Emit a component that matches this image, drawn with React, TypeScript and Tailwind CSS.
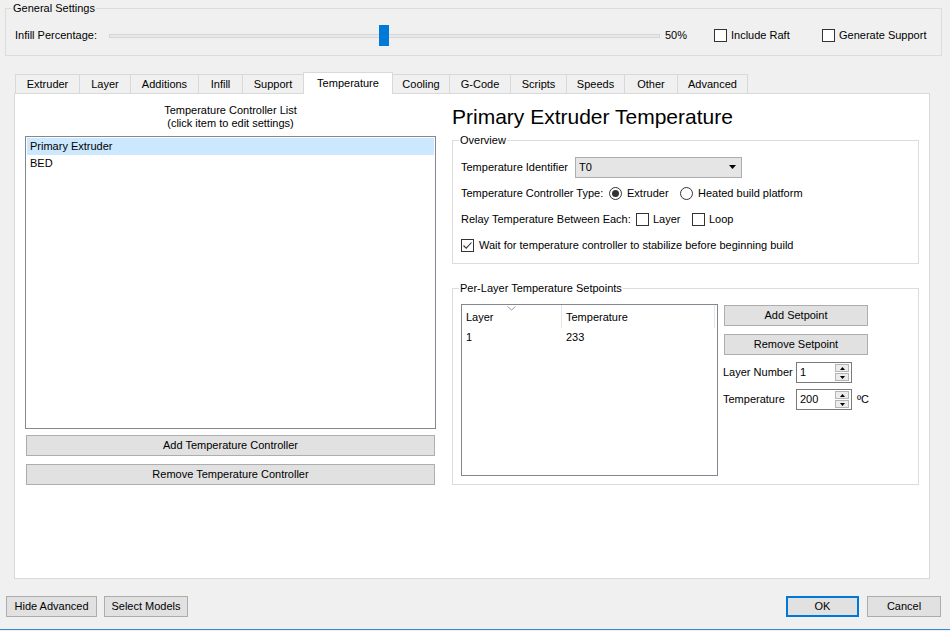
import React from "react";

function Check({ checked = false }: { checked?: boolean }) {
  return (
    <div className="w-[13px] h-[13px] flex-none border border-[#333333] bg-white relative">
      {checked && (
        <svg width="11" height="11" viewBox="0 0 11 11" className="block">
          <path d="M1.5 5.5 L4.2 8.2 L9.5 2.5" fill="none" stroke="#333333" strokeWidth="1.1" />
        </svg>
      )}
    </div>
  );
}

function Radio({ checked = false }: { checked?: boolean }) {
  return (
    <div className="w-[13px] h-[13px] flex-none rounded-full border border-[#333333] bg-white flex items-center justify-center">
      {checked && <div className="w-[7px] h-[7px] rounded-full bg-[#333333]" />}
    </div>
  );
}

function Spin() {
  return (
    <div className="ml-auto mr-[2px] mt-[1px] w-[14px] h-[17px] flex flex-col gap-[1px]">
      <div className="h-[8px] border border-[#b4b4b4] bg-[#ececec] flex items-center justify-center">
        <svg width="5" height="3" viewBox="0 0 5 3" className="block">
          <polygon points="2.5,0 5,3 0,3" fill="#000" />
        </svg>
      </div>
      <div className="h-[8px] border border-[#b4b4b4] bg-[#ececec] flex items-center justify-center">
        <svg width="5" height="3" viewBox="0 0 5 3" className="block">
          <polygon points="0,0 5,0 2.5,3" fill="#000" />
        </svg>
      </div>
    </div>
  );
}

function Numeric({ value }: { value: string }) {
  return (
    <div className="w-[56px] h-[21px] flex-none border border-[#7a7a7a] bg-white flex">
      <div className="pl-[3px] leading-[19px]">{value}</div>
      <Spin />
    </div>
  );
}

const tabs: { name: string; w: string; sel?: boolean; noLeft?: boolean; last?: boolean }[] = [
  { name: "Extruder", w: "w-[64px]" },
  { name: "Layer", w: "w-[51px]" },
  { name: "Additions", w: "w-[68px]" },
  { name: "Infill", w: "w-[44px]" },
  { name: "Support", w: "w-[61px]" },
  { name: "Temperature", w: "w-[90px]", sel: true },
  { name: "Cooling", w: "w-[56px]", noLeft: true },
  { name: "G-Code", w: "w-[61px]" },
  { name: "Scripts", w: "w-[56px]" },
  { name: "Speeds", w: "w-[58px]" },
  { name: "Other", w: "w-[53px]" },
  { name: "Advanced", w: "w-[71px]", last: true },
];

export default function App() {
  return (
    <div className="w-[950px] h-[631px] bg-[#f0f0f0] text-[11px] text-black font-['Liberation_Sans',Arial,sans-serif] flex flex-col overflow-hidden">
      {/* General settings */}
      <fieldset className="ml-[5px] mt-[1px] w-[937px] border border-[#dcdcdc]">
        <legend className="ml-[6px] px-[1px] leading-[14px]">General Settings</legend>
        <div className="h-[40px] pt-[1px] flex items-center">
          <div className="w-[103px] pl-[9px] flex-none">Infill Percentage:</div>
          <div className="w-[551px] h-[21px] flex-none relative flex items-center">
            <div className="w-full h-[4px] border border-[#d6d6d6] bg-[#e7eaea]" />
            <div className="absolute left-[270px] top-0 w-[10px] h-[21px] bg-[#007ad9]" />
          </div>
          <div className="w-[54px] pl-[5px] flex-none">50%</div>
          <div className="w-[108px] flex-none flex items-center">
            <Check />
            <span className="ml-[4px]">Include Raft</span>
          </div>
          <div className="flex items-center">
            <Check />
            <span className="ml-[4px]">Generate Support</span>
          </div>
        </div>
      </fieldset>

      {/* Tabs */}
      <div className="ml-[14px] mt-[16px] pl-[1px] h-[21px] flex items-end relative z-10">
        {tabs.map((t) =>
          t.sel ? (
            <div
              key={t.name}
              className={`${t.w} h-[22px] -mb-[1px] flex-none bg-white border-l border-t border-r border-[#d9d9d9] flex items-center justify-center pb-[1px]`}
            >
              {t.name}
            </div>
          ) : (
            <div
              key={t.name}
              className={`${t.w} h-[19px] flex-none bg-[#f0f0f0] border-t border-[#d9d9d9] flex items-center justify-center ${
                t.noLeft ? "" : "border-l"
              } ${t.last ? "border-r" : ""}`}
            >
              {t.name}
            </div>
          )
        )}
      </div>

      {/* Tab page */}
      <div className="ml-[14px] w-[916px] h-[486px] flex-none border border-[#d9d9d9] bg-white flex">
        {/* Left column */}
        <div className="ml-[10px] w-[411px] pt-[10px] flex flex-col">
          <div className="text-center leading-[13px]">
            <div>Temperature Controller List</div>
            <div>(click item to edit settings)</div>
          </div>
          <div className="mt-[6px] h-[293px] border border-[#828790] bg-white pt-[1px] px-[1px]">
            <div className="h-[17px] bg-[#cce8ff] pl-[3px] leading-[17px]">Primary Extruder</div>
            <div className="h-[16px] pl-[3px] leading-[16px]">BED</div>
          </div>
          <div className="mt-[6px] ml-[1px] w-[409px] h-[21px] border border-[#adadad] bg-[#e1e1e1] flex items-center justify-center">
            Add Temperature Controller
          </div>
          <div className="mt-[8px] ml-[1px] w-[409px] h-[21px] border border-[#adadad] bg-[#e1e1e1] flex items-center justify-center">
            Remove Temperature Controller
          </div>
        </div>

        {/* Right column */}
        <div className="ml-[16px] w-[467px] pt-[10px] flex flex-col">
          <div className="text-[21px] leading-[26px]">Primary Extruder Temperature</div>

          <fieldset className="mt-[3px] w-[467px] border border-[#dcdcdc]">
            <legend className="ml-[6px] px-[1px] leading-[14px]">Overview</legend>
            <div className="pl-[8px] pt-[7px] pb-[5px]">
              <div className="h-[26px] flex items-center">
                <div className="w-[114px] flex-none">Temperature Identifier</div>
                <div className="w-[167px] h-[21px] border border-[#adadad] bg-[#e5e5e5] flex items-center pl-[3px] pr-[5px]">
                  <span>T0</span>
                  <svg width="7" height="4" viewBox="0 0 7 4" className="ml-auto block">
                    <polygon points="0,0 7,0 3.5,4" fill="#000" />
                  </svg>
                </div>
              </div>
              <div className="h-[26px] flex items-center">
                <div className="w-[148px] flex-none">Temperature Controller Type:</div>
                <div className="w-[71px] flex-none flex items-center">
                  <Radio checked />
                  <span className="ml-[5px]">Extruder</span>
                </div>
                <div className="flex items-center">
                  <Radio />
                  <span className="ml-[5px]">Heated build platform</span>
                </div>
              </div>
              <div className="h-[26px] flex items-center">
                <div className="w-[175px] flex-none">Relay Temperature Between Each:</div>
                <div className="w-[56px] flex-none flex items-center">
                  <Check />
                  <span className="ml-[4px]">Layer</span>
                </div>
                <div className="flex items-center">
                  <Check />
                  <span className="ml-[4px]">Loop</span>
                </div>
              </div>
              <div className="h-[26px] flex items-center">
                <Check checked />
                <span className="ml-[5px]">Wait for temperature controller to stabilize before beginning build</span>
              </div>
            </div>
          </fieldset>

          <fieldset className="mt-[17px] w-[467px] border border-[#dcdcdc]">
            <legend className="ml-[6px] px-[1px] leading-[14px]">Per-Layer Temperature Setpoints</legend>
            <div className="pl-[8px] pt-[9px] pb-[8px] flex">
              <div className="w-[257px] h-[172px] flex-none border border-[#828790] bg-white">
                <div className="h-[23px] flex">
                  <div className="w-[100px] flex-none relative border-r border-[#e5e5e5] pl-[4px] pt-[2px] flex items-center">
                    <svg width="9" height="5" viewBox="0 0 9 5" className="absolute left-[45px] top-[1px] block">
                      <polyline points="0.5,0.5 4.5,4 8.5,0.5" fill="none" stroke="#9a9a9a" strokeWidth="1" />
                    </svg>
                    Layer
                  </div>
                  <div className="w-[153px] flex-none border-r border-[#e5e5e5] pl-[4px] pt-[2px] flex items-center">
                    Temperature
                  </div>
                </div>
                <div className="h-[18px] flex items-center">
                  <div className="w-[100px] pl-[4px]">1</div>
                  <div className="pl-[4px]">233</div>
                </div>
              </div>
              <div className="ml-[6px] flex flex-col">
                <div className="mt-[1px] w-[144px] h-[21px] border border-[#adadad] bg-[#e1e1e1] flex items-center justify-center">
                  Add Setpoint
                </div>
                <div className="mt-[8px] w-[144px] h-[21px] border border-[#adadad] bg-[#e1e1e1] flex items-center justify-center">
                  Remove Setpoint
                </div>
                <div className="mt-[7px] -ml-[1px] h-[21px] flex items-center">
                  <div className="w-[73px] flex-none">Layer Number</div>
                  <Numeric value="1" />
                </div>
                <div className="mt-[6px] -ml-[1px] h-[21px] flex items-center">
                  <div className="w-[73px] flex-none">Temperature</div>
                  <Numeric value="200" />
                  <span className="ml-[5px]">ºC</span>
                </div>
              </div>
            </div>
          </fieldset>
        </div>
      </div>

      {/* Bottom buttons */}
      <div className="mt-[17px] h-[21px] flex">
        <div className="ml-[6px] w-[91px] h-[21px] border border-[#adadad] bg-[#e1e1e1] flex items-center justify-center">
          Hide Advanced
        </div>
        <div className="ml-[7px] w-[84px] h-[21px] border border-[#adadad] bg-[#e1e1e1] flex items-center justify-center">
          Select Models
        </div>
        <div className="ml-auto w-[73px] h-[21px] border-2 border-[#0078d7] bg-[#e1e1e1] flex items-center justify-center">
          OK
        </div>
        <div className="ml-[8px] mr-[9px] w-[74px] h-[21px] border border-[#adadad] bg-[#e1e1e1] flex items-center justify-center">
          Cancel
        </div>
      </div>

      <div className="mt-auto mb-[1px] h-[1px] bg-[#3b87d2]" />
    </div>
  );
}
